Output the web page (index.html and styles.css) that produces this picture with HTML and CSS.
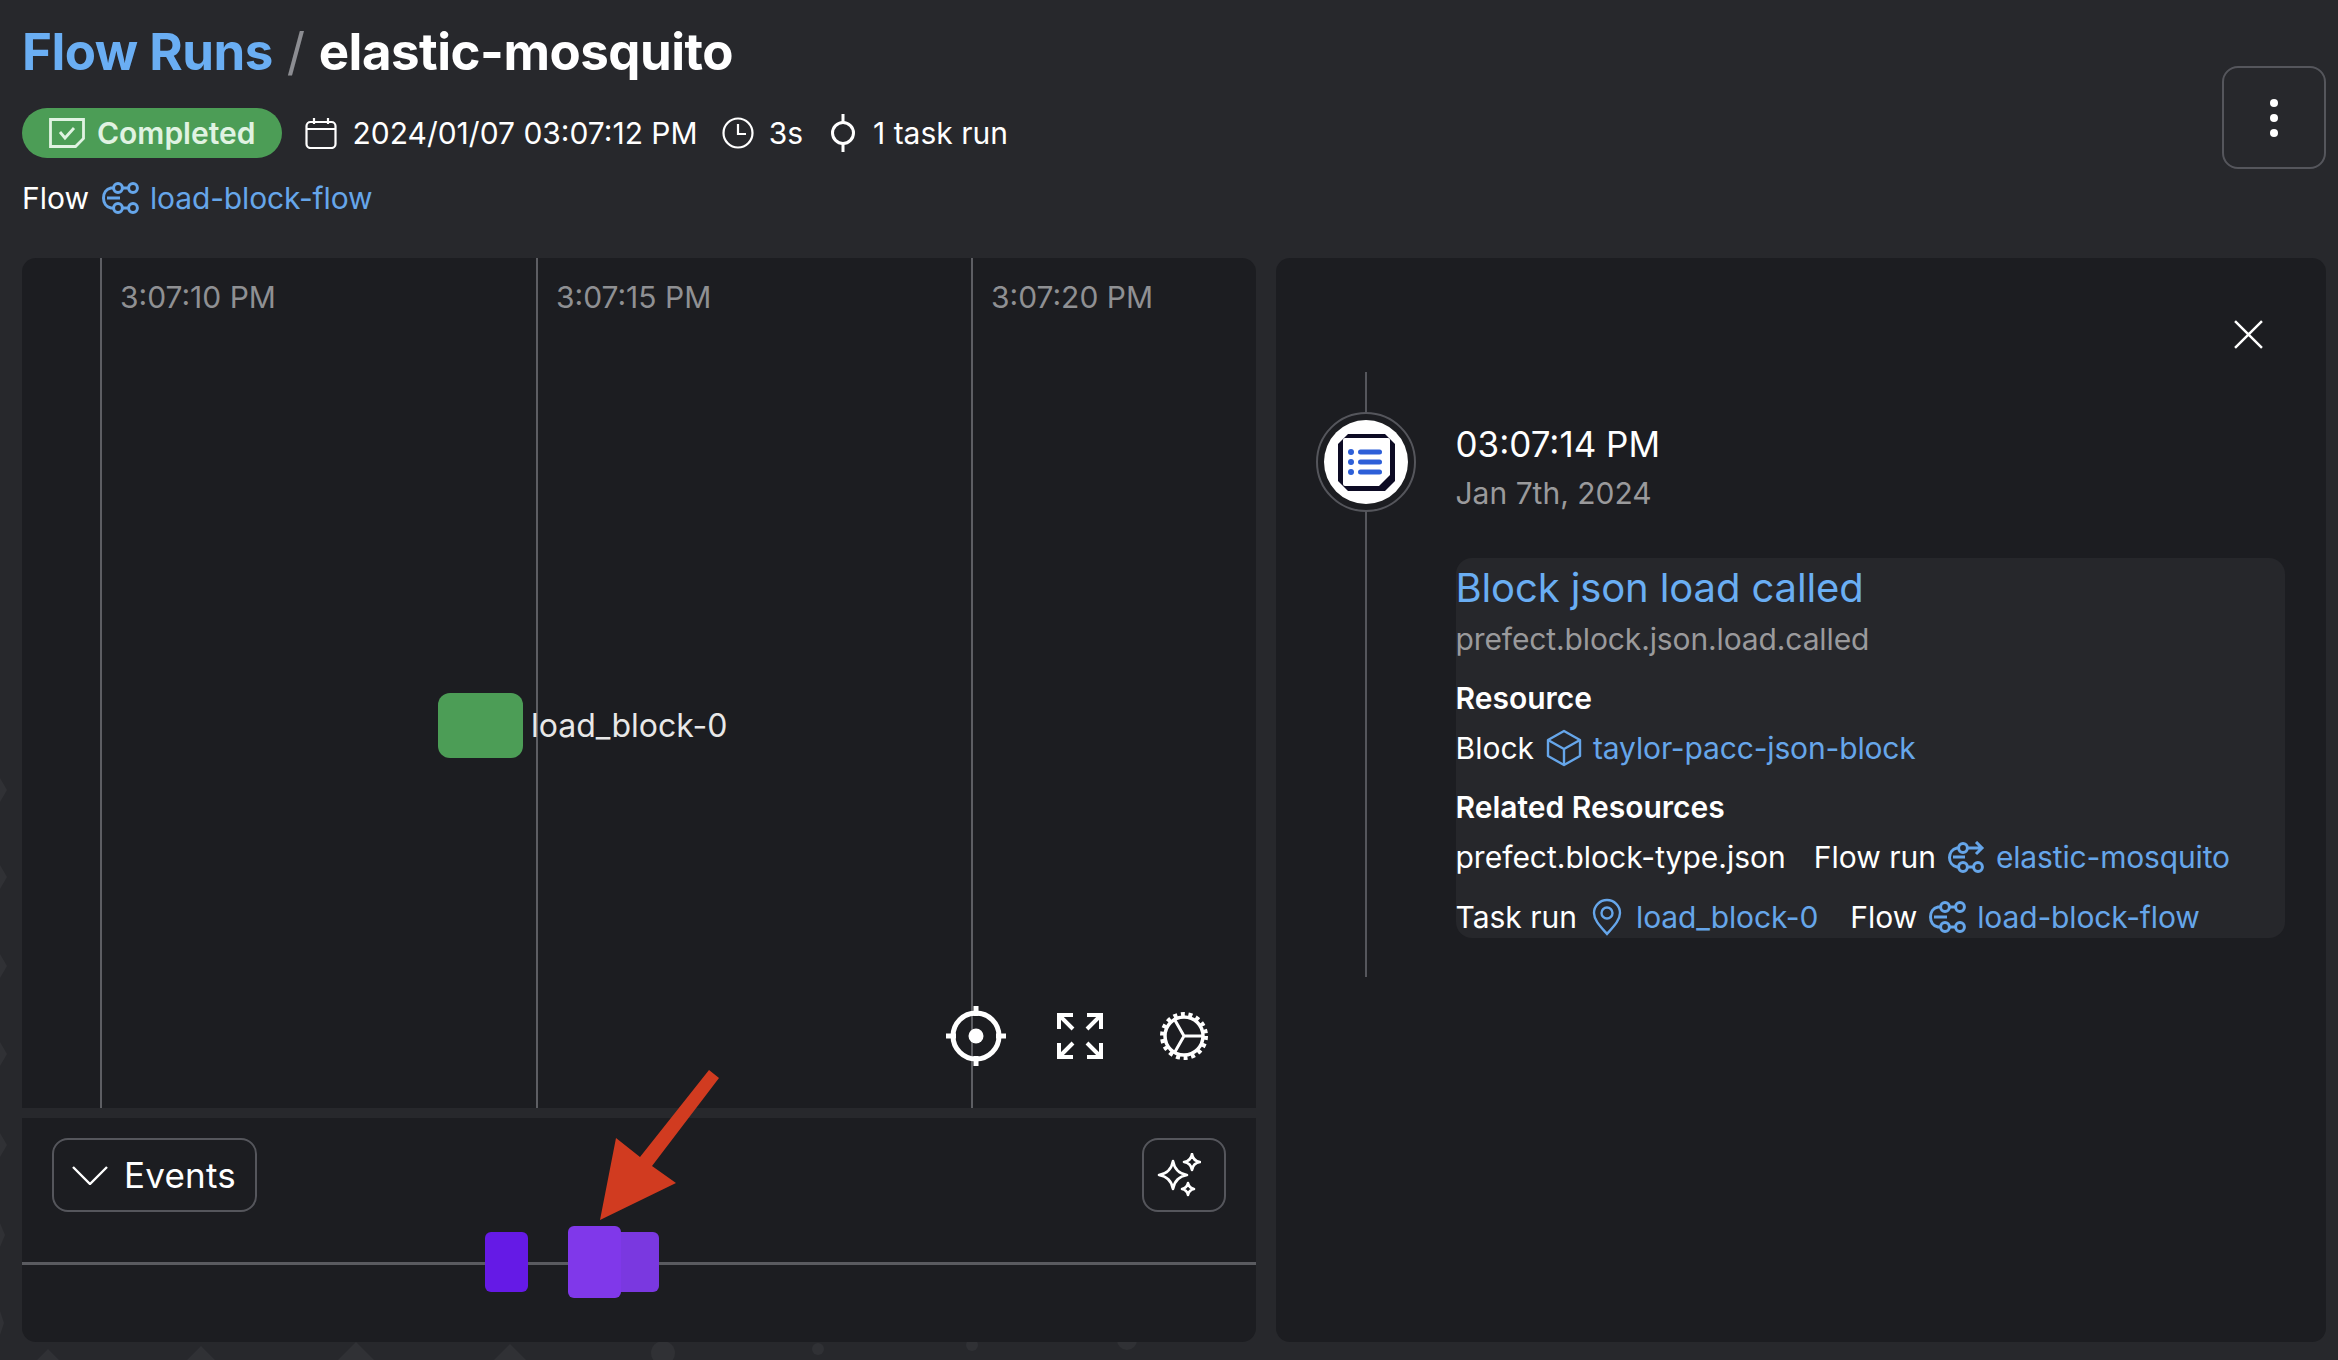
FILE: index.html
```html
<!DOCTYPE html>
<html lang="en">

<head>
    <meta charset="UTF-8">
    <title>elastic-mosquito</title>
    <link rel="stylesheet" href="styles.css">
</head>

<body>
    <svg width="0" height="0" class="defs">
        <symbol id="flow-icon" viewBox="0 0 37 32">
            <g fill="none" stroke="currentColor" stroke-width="3">
                <circle cx="16" cy="6" r="4.4"/><circle cx="31" cy="6" r="4.4"/>
                <circle cx="16" cy="26" r="4.4"/><circle cx="31" cy="26" r="4.4"/>
                <path d="M20 6h7M20 26h7"/>
                <path d="M12 6H9C-1 8-1 24 9 26h3"/>
                <path d="M5 16h13"/>
            </g>
        </symbol>
        <symbol id="flow-run-icon" viewBox="0 0 37 32">
            <g fill="none" stroke="currentColor" stroke-width="3">
                <circle cx="15" cy="7" r="4.4"/>
                <circle cx="15" cy="26" r="4.4"/><circle cx="30" cy="26" r="4.4"/>
                <path d="M19 7h15M28 1l6 6-6 6M19 26h7"/>
                <path d="M11 7H9C-1 9-1 24 9 26h2"/>
                <path d="M5 16h12"/>
            </g>
        </symbol>
    </svg>

    <!-- faint pattern that peeks out round the panels -->
    <svg class="backdrop" viewBox="0 0 2338 1360">
        <g fill="#303135">
            <path d="M48 1349l26 26H22zM201 1346l34 34H167zM356 1342l40 40H316zM510 1344l28 28-28 28-28-28z"/>
            <circle cx="663" cy="1353" r="12"/><circle cx="818" cy="1349" r="6"/><circle cx="972" cy="1345" r="6"/><circle cx="1127" cy="1340" r="10"/>
            <path d="M0 778l7 12-7 12zM0 865l7 12-7 12zM0 954l7 12-7 12zM0 1042l7 12-7 12zM0 1133l7 12-7 12zM0 1223l5 12-5 12zM0 1311l4 12-4 12z"/>
        </g>
    </svg>

    <header class="page-header">
        <div class="header-main">
            <h1 class="title"><a class="title-link">Flow Runs</a><span class="title-slash">/</span><span>elastic-mosquito</span></h1>
            <div class="meta-row">
                <span class="badge">
                    <svg class="badge-icon" viewBox="0 0 36 30" fill="none" stroke="currentColor" stroke-width="2.8"><path d="M1.5 1.5h33v19l-8 8h-25z"/><path d="M11 14l5 6 9-10"/></svg>
                    Completed
                </span>
                <span class="meta-item">
                    <svg class="meta-icon" viewBox="0 0 32 32" fill="none" stroke="currentColor" stroke-width="2.2"><rect x="1.5" y="5" width="29" height="26" rx="4"/><path d="M1.5 12h29M9 1v6M23 1v6"/></svg>
                    2024/01/07 03:07:12 PM
                </span>
                <span class="meta-item">
                    <svg class="meta-icon" viewBox="0 0 32 32" fill="none" stroke="currentColor" stroke-width="2.2"><circle cx="16" cy="16" r="14.5"/><path d="M16 7v10h8"/></svg>
                    3s
                </span>
                <span class="meta-item meta-task">
                    <svg class="meta-icon task-icon" viewBox="0 0 26 38" fill="none" stroke="currentColor" stroke-width="3"><circle cx="13" cy="19" r="10.5"/><path d="M13 0v8M13 30v8"/></svg>
                    1 task run
                </span>
            </div>
            <div class="flow-row">
                <span>Flow</span>
                <a class="link"><svg class="flow-icon"><use href="#flow-icon"/></svg>load-block-flow</a>
            </div>
        </div>
        <button class="menu-button"><span class="dot"></span><span class="dot"></span><span class="dot"></span></button>
    </header>

    <main class="columns">
        <section class="left-col">
            <div class="timeline panel-top">
                <div class="grid-line line-1"><span class="grid-label">3:07:10 PM</span></div>
                <div class="grid-line line-2"><span class="grid-label">3:07:15 PM</span></div>
                <div class="grid-line line-3"><span class="grid-label">3:07:20 PM</span></div>
                <div class="node"></div>
                <span class="node-label">load_block-0</span>
                <div class="controls">
                    <svg class="ctrl-target" viewBox="0 0 60 60" fill="none" stroke="#fff" stroke-width="5"><circle cx="30" cy="30" r="23"/><path d="M30 0v10M30 50v10M0 30h10M50 30h10"/><circle cx="30" cy="30" r="7.5" fill="#fff" stroke="none"/></svg>
                    <svg class="ctrl-expand" viewBox="0 0 46 46" fill="none" stroke="#fff" stroke-width="4"><path d="M2 16V2h14M2 2l14 14M30 2h14v14M44 2L30 16M2 30v14h14M2 44l14-14M44 30v14H30M44 44L30 30"/></svg>
                    <svg class="ctrl-gear" viewBox="0 0 48 48" fill="none" stroke="#fff"><circle cx="24" cy="24" r="19" stroke-width="3.5"/><circle cx="24" cy="24" r="22" stroke-width="4" stroke-dasharray="4 3.68"/><path d="M24 24H44M24 24L14 6.5M24 24L14 41.5" stroke-width="3"/></svg>
                </div>
            </div>
            <div class="events panel-bottom">
                <div class="events-bar">
                    <button class="events-toggle">
                        <svg class="chevron" viewBox="0 0 36 20" fill="none" stroke="#fff" stroke-width="2.4"><path d="M1 2l17 17L35 2"/></svg>
                        Events
                    </button>
                    <button class="sparkle-button">
                        <svg viewBox="0 0 44 44" class="sparkle" fill="none" stroke="#fff" stroke-width="2.6" stroke-linejoin="round"><path d="M16 8Q18 20 30 22 18 24 16 36 14 24 2 22 14 20 16 8z"/><path d="M35 1Q36 8 43 9 36 10 35 17 34 10 27 9 34 8 35 1z"/><path d="M31 30Q32 35 37 36 32 37 31 42 30 37 25 36 30 35 31 30z"/></svg>
                    </button>
                </div>
                <div class="event-line"></div>
                <div class="event event-a"></div>
                <div class="event event-c"></div>
                <div class="event event-b"></div>
                <svg class="arrow" viewBox="0 0 120 150"><polygon points="109,0 119,8 52,96 76,113 0,150 16,68 40,87" fill="#d13b20"/></svg>
            </div>
        </section>

        <section class="detail">
            <svg class="close-icon" viewBox="0 0 28 28" stroke="#fff" stroke-width="2.4"><path d="M1 1l26 26M27 1L1 27"/></svg>
            <div class="event-detail">
                <div class="rail">
                    <div class="rail-ring">
                        <div class="rail-disc">
                            <svg class="rail-icon" viewBox="0 0 57 57"><path d="M10 0h37l10 10v37l-10 10H10L0 47V10z" fill="#0d0b24"/><path d="M7 4h43a2 2 0 0 1 2 2v35L41 52H7a2 2 0 0 1-2-2V6a2 2 0 0 1 2-2z" fill="#fff"/><g fill="#2d5fd8"><circle cx="13" cy="18" r="3"/><circle cx="13" cy="28" r="3"/><circle cx="13" cy="38" r="3"/><rect x="20" y="15.5" width="24" height="5" rx="2.5"/><rect x="20" y="25.5" width="24" height="5" rx="2.5"/><rect x="20" y="35.5" width="24" height="5" rx="2.5"/></g></svg>
                        </div>
                    </div>
                </div>
                <div class="detail-body">
                    <div class="detail-time">03:07:14 PM</div>
                    <div class="detail-date">Jan 7th, 2024</div>
                    <div class="card">
                        <a class="card-title">Block json load called</a>
                        <div class="card-sub">prefect.block.json.load.called</div>
                        <div class="card-heading">Resource</div>
                        <div class="card-row">
                            <span>Block</span>
                            <a class="link"><svg class="cube-icon" viewBox="0 0 36 38" fill="none" stroke="currentColor" stroke-width="2.4" stroke-linejoin="round"><path d="M18 2l16 9v16l-16 9-16-9V11z"/><path d="M2 11l16 9 16-9M18 20v16"/></svg>taylor-pacc-json-block</a>
                        </div>
                        <div class="card-heading">Related Resources</div>
                        <div class="card-row">
                            <span>prefect.block-type.json</span>
                            <span class="resource resource-tight">Flow run</span>
                            <a class="link"><svg class="flow-icon"><use href="#flow-run-icon"/></svg>elastic-mosquito</a>
                        </div>
                        <div class="card-row row-last">
                            <span>Task run</span>
                            <a class="link link-pin"><svg class="pin-icon" viewBox="0 0 30 38" fill="none" stroke="currentColor" stroke-width="2.4"><path d="M15 36C8 28 2 22 2 15a13 13 0 0 1 26 0c0 7-6 13-13 21z"/><circle cx="15" cy="15" r="5.5"/></svg>load_block-0</a>
                            <span class="resource">Flow</span>
                            <a class="link"><svg class="flow-icon"><use href="#flow-icon"/></svg>load-block-flow</a>
                        </div>
                    </div>
                </div>
            </div>
        </section>
    </main>
</body>

</html>
```

FILE: styles.css
```css
* {
    box-sizing: border-box;
}

body {
    margin: 0;
    width: 2338px;
    height: 1360px;
    overflow: hidden;
    background: #27282c;
    color: #fff;
    font-family: Inter, "Noto Sans", sans-serif;
    font-size: 30px;
    padding: 0 12px 18px 22px;
}

.defs {
    position: absolute;
}

.backdrop {
    position: absolute;
    left: 0;
    top: 0;
    width: 2338px;
    height: 1360px;
    z-index: -1;
}

button {
    background: none;
    color: inherit;
    font: inherit;
    cursor: pointer;
}

.page-header {
    display: flex;
    justify-content: space-between;
    height: 258px;
}

.title {
    margin: 0;
    padding-top: 22px;
    height: 108px;
    font-size: 51px;
    line-height: 60px;
    font-weight: 700;
    letter-spacing: -0.5px;
}

.title-link {
    color: #6aaef3;
}

.title-slash {
    color: #8c8d92;
    font-weight: 400;
    margin: 0 14px;
}

.meta-row {
    display: flex;
    align-items: center;
    height: 50px;
}

.badge {
    display: flex;
    align-items: center;
    gap: 12px;
    height: 50px;
    padding: 0 27px 0 27px;
    background: #4c9d56;
    border-radius: 25px;
    color: #e0f3e2;
    font-weight: 600;
    margin-right: 23px;
}

.badge-icon {
    width: 36px;
    height: 30px;
}

.meta-item {
    display: flex;
    align-items: center;
    gap: 15px;
    margin-right: 24px;
    white-space: nowrap;
}

.meta-task {
    gap: 17px;
    margin-left: 3px;
}

.meta-icon {
    width: 32px;
    height: 32px;
}

.task-icon {
    width: 26px;
    height: 38px;
}

.flow-row {
    display: flex;
    align-items: center;
    gap: 13px;
    margin-top: 20px;
    height: 40px;
}

.link {
    display: inline-flex;
    align-items: center;
    gap: 11px;
    color: #66a6ea;
    white-space: nowrap;
    letter-spacing: -0.15px;
}

.link-pin {
    gap: 14px;
    margin-left: 3px;
}

.flow-icon {
    width: 37px;
    height: 32px;
}

.menu-button {
    display: flex;
    flex-direction: column;
    align-items: center;
    justify-content: center;
    gap: 7px;
    width: 104px;
    height: 103px;
    margin-top: 66px;
    border: 2px solid #55565c;
    border-radius: 16px;
}

.dot {
    width: 8px;
    height: 8px;
    border-radius: 50%;
    background: #fff;
}

.columns {
    display: flex;
    gap: 20px;
    height: 1084px;
}

.left-col {
    display: flex;
    flex-direction: column;
    gap: 10px;
    width: 1234px;
}

.panel-top {
    border-radius: 14px 14px 0 0;
}

.panel-bottom {
    border-radius: 0 0 14px 14px;
}

.timeline {
    position: relative;
    height: 850px;
    background: #1c1d21;
    overflow: hidden;
}

/* graph canvas, everything is relative to the panel */
.grid-line {
    position: absolute;
    top: 0;
    bottom: 0;
    width: 2px;
    background: #5d5e63;
}

.line-1 { left: 78px; }
.line-2 { left: 514px; }
.line-3 { left: 949px; }

.grid-label {
    position: absolute;
    left: 20px;
    top: 21px;
    color: #8f9093;
    white-space: nowrap;
    font-size: 30px;
}

.node {
    position: absolute;
    left: 416px;
    top: 435px;
    width: 85px;
    height: 65px;
    border-radius: 12px;
    background: #4c9d56;
}

.node-label {
    position: absolute;
    left: 509px;
    top: 448px;
    color: #e8e8e8;
    font-size: 32px;
    line-height: 40px;
}

.controls {
    position: absolute;
    left: 924px;
    top: 748px;
    display: flex;
    align-items: center;
}

.ctrl-target {
    width: 60px;
    height: 60px;
    margin-right: 51px;
}

.ctrl-expand {
    width: 46px;
    height: 46px;
    margin-right: 57px;
}

.ctrl-gear {
    width: 48px;
    height: 48px;
}

.events {
    position: relative;
    flex: 1;
    background: #1c1d21;
}

.events-bar {
    display: flex;
    justify-content: space-between;
    padding: 20px 30px 0;
}

.events-toggle {
    display: flex;
    align-items: center;
    gap: 16px;
    width: 205px;
    height: 74px;
    padding: 0 0 0 18px;
    border: 2px solid #55565c;
    border-radius: 16px;
    font-size: 35px;
    letter-spacing: 0.2px;
}

.chevron {
    width: 36px;
    height: 20px;
}

.sparkle-button {
    display: flex;
    align-items: center;
    justify-content: center;
    width: 84px;
    height: 74px;
    padding: 0 10px 0 0;
    border: 2px solid #55565c;
    border-radius: 16px;
}

.sparkle {
    width: 44px;
    height: 44px;
}

.event-line {
    position: absolute;
    left: 0;
    right: 0;
    top: 144px;
    height: 3px;
    background: #5a5b60;
}

.event {
    position: absolute;
    border-radius: 6px;
}

.event-a {
    left: 463px;
    top: 114px;
    width: 43px;
    height: 60px;
    background: #651ae6;
}

.event-b {
    left: 546px;
    top: 108px;
    width: 53px;
    height: 72px;
    background: #8038ea;
}

.event-c {
    left: 590px;
    top: 114px;
    width: 47px;
    height: 60px;
    background: #7a38e0;
}

.arrow {
    position: absolute;
    left: 578px;
    top: -48px;
    width: 120px;
    height: 150px;
}

.detail {
    position: relative;
    width: 1050px;
    background: #1c1d21;
    border-radius: 14px;
}

.close-icon {
    position: absolute;
    right: 63px;
    top: 62px;
    width: 29px;
    height: 29px;
}

.event-detail {
    display: flex;
    padding: 114px 41px 0 40px;
}

.rail {
    position: relative;
    width: 100px;
    height: 605px;
    margin-right: 39.5px;
    display: flex;
    justify-content: center;
    align-items: flex-start;
    padding-top: 40px;
}

.rail::before {
    content: "";
    position: absolute;
    top: 0;
    bottom: 0;
    left: 49px;
    width: 2px;
    background: #55565c;
}

.rail-ring {
    position: relative;
    width: 100px;
    height: 100px;
    border-radius: 50%;
    border: 2px solid #55565c;
    background: #1c1d21;
    display: flex;
    align-items: center;
    justify-content: center;
}

.rail-disc {
    width: 84px;
    height: 84px;
    border-radius: 50%;
    background: #fff;
    display: flex;
    align-items: center;
    justify-content: center;
}

.rail-icon {
    width: 57px;
    height: 57px;
}

.detail-body {
    flex: 1;
    padding-top: 50.5px;
}

.detail-time {
    font-size: 35px;
    line-height: 42px;
}

.detail-date {
    margin-top: 8px;
    color: #9a9a9c;
    font-size: 30px;
    line-height: 40px;
}

.card {
    margin-top: 45px;
    height: 380px;
    padding-top: 5px;
    background: #26272b;
    border-radius: 16px;
    overflow: hidden;
}

.card-title {
    display: block;
    color: #6aaef3;
    font-size: 40px;
    line-height: 50px;
    letter-spacing: -0.12px;
}

.card-sub {
    margin-top: 6px;
    color: #9a9a9c;
    font-size: 30px;
    line-height: 40px;
    letter-spacing: -0.12px;
}

.card-heading {
    margin-top: 19px;
    font-weight: 600;
    line-height: 40px;
}

.card-row {
    display: flex;
    align-items: center;
    gap: 12px;
    height: 40px;
    margin-top: 10px;
    white-space: nowrap;
}

.row-last {
    margin-top: 20px;
}

.resource {
    margin-left: 20px;
}

.resource-tight {
    margin-left: 16px;
}

.cube-icon {
    width: 36px;
    height: 38px;
}

.pin-icon {
    width: 30px;
    height: 38px;
}
```
